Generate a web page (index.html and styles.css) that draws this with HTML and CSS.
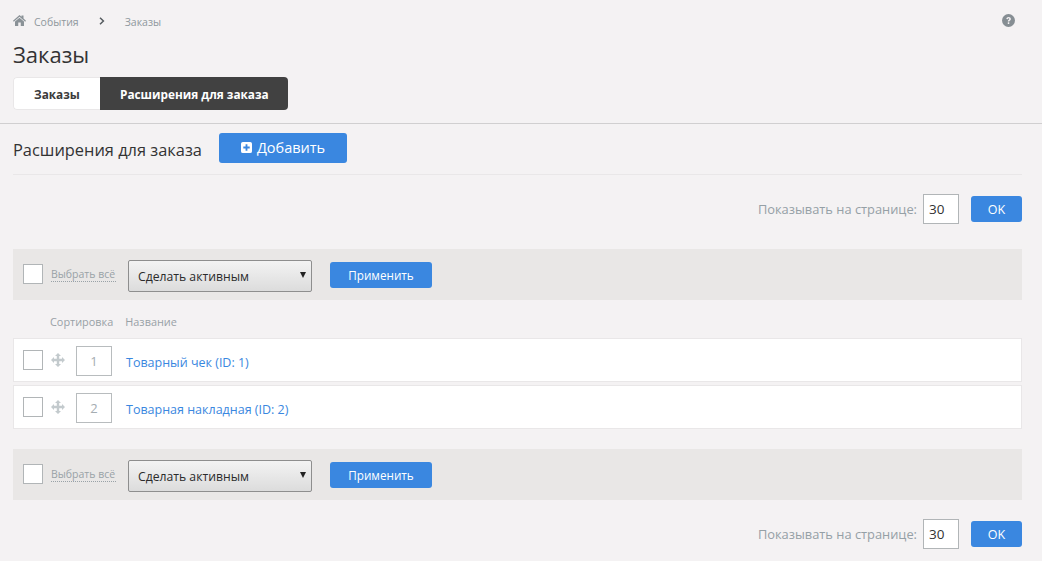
FILE: index.html
```html
<!DOCTYPE html>
<html lang="ru">
<head>
<meta charset="utf-8">
<title>Заказы</title>
<link rel="stylesheet" href="styles.css">
</head>
<body>
<header class="top">
  <nav class="crumbs">
    <svg class="home" viewBox="0 0 26 22" width="13" height="11"><path d="M13 0 L17 3.6 V1 H21 V7.2 L26 11.6 L24.4 13.4 L13 3.4 L1.6 13.4 L0 11.6 Z M4 13.2 L13 5.4 L22 13.2 V22 H15.5 V15 H10.5 V22 H4 Z" fill="#8a9297"/></svg>
    <a class="crumb crumb-first">События</a>
    <svg class="sep" viewBox="0 0 6 8" width="6" height="8"><path d="M1 0.8 L4.4 4 L1 7.2" fill="none" stroke="#555b5f" stroke-width="1.5"/></svg>
    <a class="crumb">Заказы</a>
    <svg class="help" viewBox="0 0 24 24" width="13" height="13"><circle cx="12" cy="12" r="12" fill="#868e93"/><path d="M8 9.4 C8 6.8 10 5.4 12.2 5.4 C14.600 5.4 16.4 7 16.4 9.1 C16.4 11.9 13.4 12 13.4 14 H10.7 C10.7 10.9 13.4 10.8 13.4 9.2 C13.4 8.5 12.9 8 12.1 8 C11.2 8 10.8 8.6 10.6 9.6 Z M10.7 15.4 H13.4 V18.4 H10.7 Z" fill="#f4f2f3"/></svg>
  </nav>
  <h1 class="title">Заказы</h1>
  <div class="tabs">
    <a class="tab">Заказы</a>
    <a class="tab tab-active">Расширения для заказа</a>
  </div>
</header>
<main class="content">
  <div class="section-head">
    <h2 class="section-title">Расширения для заказа</h2>
    <button class="btn btn-add" type="button">
      <svg viewBox="0 0 12 12" width="11" height="11"><path d="M2 0 H10 A2 2 0 0 1 12 2 V10 A2 2 0 0 1 10 12 H2 A2 2 0 0 1 0 10 V2 A2 2 0 0 1 2 0 Z M5 2.5 V5 H2.5 V7 H5 V9.500 H7 V7 H9.500 V5 H7 V2.5 Z" fill="#fff" fill-rule="evenodd"/></svg>
      Добавить
    </button>
  </div>
  <div class="perpage perpage-top">
    <span class="perpage-label">Показывать на странице:</span>
    <span class="num-input">30</span>
    <button class="btn btn-ok" type="button">OK</button>
  </div>
  <div class="bulk">
    <span class="check"></span>
    <span class="select-all">Выбрать всё</span>
    <span class="select">Сделать активным<i class="arrow"></i></span>
    <button class="btn btn-apply" type="button">Применить</button>
  </div>
  <div class="col-heads">
    <span class="col-sort">Сортировка</span>
    <span>Название</span>
  </div>
  <div class="rows">
    <div class="row">
      <span class="check"></span>
      <svg class="move" viewBox="0 0 14 14" width="14" height="14"><path d="M7 0 L10 3 H8.200 V5.800 H11 V4 L14 7 L11 10 V8.200 H8.200 V11 H10 L7 14 L4 11 H5.800 V8.200 H3 V10 L0 7 L3 4 V5.800 H5.800 V3 H4 Z" fill="#c3cacd"/></svg>
      <span class="order">1</span>
      <a class="row-link">Товарный чек (ID: 1)</a>
    </div>
    <div class="row">
      <span class="check"></span>
      <svg class="move" viewBox="0 0 14 14" width="14" height="14"><path d="M7 0 L10 3 H8.200 V5.800 H11 V4 L14 7 L11 10 V8.200 H8.200 V11 H10 L7 14 L4 11 H5.800 V8.200 H3 V10 L0 7 L3 4 V5.800 H5.800 V3 H4 Z" fill="#c3cacd"/></svg>
      <span class="order">2</span>
      <a class="row-link">Товарная накладная (ID: 2)</a>
    </div>
  </div>
  <div class="bulk bulk-bottom">
    <span class="check"></span>
    <span class="select-all">Выбрать всё</span>
    <span class="select">Сделать активным<i class="arrow"></i></span>
    <button class="btn btn-apply" type="button">Применить</button>
  </div>
  <div class="perpage perpage-bottom">
    <span class="perpage-label">Показывать на странице:</span>
    <span class="num-input">30</span>
    <button class="btn btn-ok" type="button">OK</button>
  </div>
</main>
</body>
</html>
```
FILE: styles.css
```css
* { box-sizing: border-box; }
html, body { height: 100%; }
body {
  margin: 0;
  background: #f4f2f3;
  color: #333;
  font-family: "Open Sans", "Noto Sans", sans-serif;
  font-size: 13px;
  overflow: hidden;
}
.top {
  padding: 14px 13px 13px;
  border-bottom: 1px solid #d0cfd0;
  height: 124px;
}
.crumbs {
  display: flex;
  align-items: center;
  height: 14px;
  padding: 1px 7px 0 0;
  font-size: 10.500px;
  color: #8f989d;
}
.home { margin-top: -2px; }
.crumb-first { margin-left: 8px; }
.sep { margin: -1px 20px 0 20px; }
.help { margin: -2px 7px 0 auto; }
.title {
  margin: 11px 0 0;
  font-size: 22px;
  font-weight: 400;
  line-height: 30px;
  color: #333;
}
.tabs {
  display: inline-flex;
  height: 33px;
  margin-top: 8px;
  border-radius: 4px;
  overflow: hidden;
  font-size: 11.800px;
  font-weight: 700;
}
.tab {
  display: flex;
  align-items: center;
  width: 87px;
  padding-left: 20px;
  background: #fff;
  border: 1px solid #e9e7e8;
  border-right: 0;
  border-radius: 4px 0 0 4px;
  color: #3a3a3a;
}
.tab.tab-active {
  width: 188px;
  padding: 0 0 0 20px;
  border: 0;
  border-radius: 0;
  background: #414141;
  color: #fff;
}
.content { padding: 0 20px 0 13px; }
.section-head {
  display: flex;
  align-items: center;
  height: 51px;
  padding-bottom: 3px;
  border-bottom: 1px solid #e9e7e8;
}
.section-title {
  width: 206px;
  margin: 3px 0 0;
  font-size: 16.400px;
  font-weight: 400;
  color: #333;
}
.btn {
  border: 0;
  border-radius: 3px;
  background: #3a87e0;
  color: #fff;
  font-family: inherit;
  padding: 0;
}
.btn-add {
  display: flex;
  align-items: center;
  justify-content: center;
  gap: 5px;
  width: 128px;
  height: 30px;
  font-size: 14.500px;
}
.perpage {
  display: flex;
  align-items: center;
  justify-content: flex-end;
  font-size: 12.850px;
  color: #95a0a6;
}
.perpage-top { margin-top: 19px; }
.perpage-bottom { margin-top: 19px; }
.perpage-label { margin-right: 6px; }
.num-input {
  display: flex;
  align-items: center;
  width: 36px;
  height: 30px;
  padding-left: 5px;
  background: #fff;
  border: 1px solid #b1b5b7;
  color: #333;
  font-size: 13.500px;
}
.btn-ok {
  width: 51px;
  height: 26px;
  margin-left: 12px;
  font-size: 12.500px;
}
.bulk {
  display: flex;
  align-items: center;
  height: 51px;
  margin-top: 25px;
  padding-left: 10px;
  background: #e9e7e6;
}
.bulk-bottom { margin-top: 20px; }
.check {
  display: block;
  flex: none;
  width: 20px;
  height: 20px;
  background: #fff;
  border: 1px solid #b1b5b7;
}
.bulk .check { margin-top: -2px; }
.select-all {
  width: 65px;
  margin-left: 8px;
  font-size: 10.500px;
  color: #99a2a7;
  border-bottom: 1px dotted #99a2a7;
  line-height: 13px;
}
.select {
  position: relative;
  display: flex;
  align-items: center;
  width: 184px;
  height: 32px;
  margin-left: 12px;
  margin-top: 2px;
  padding: 1px 0 0 9px;
  border: 1px solid #8e8e8e;
  border-radius: 2px;
  background: linear-gradient(#f3f3f3, #dcdcdc);
  color: #2b2b2b;
  font-size: 12.200px;
}
.arrow {
  position: absolute;
  right: 5px;
  top: 11px;
  border-left: 3px solid transparent;
  border-right: 3px solid transparent;
  border-top: 6px solid #222;
}
.btn-apply {
  width: 102px;
  height: 26px;
  margin-left: 18px;
  padding-top: 1px;
  font-size: 11.700px;
}
.col-heads {
  display: flex;
  align-items: center;
  height: 38px;
  padding: 8px 0 4px 37px;
  font-size: 10.900px;
  color: #98a1a6;
}
.col-sort { margin-right: 12px; }
.rows {
  display: flex;
  flex-direction: column;
  gap: 3px;
}
.row {
  display: flex;
  align-items: center;
  height: 44px;
  padding-left: 9px;
  background: #fff;
  border: 1px solid #e9e7e8;
}
.move { margin: -1px 0 0 8px; flex: none; }
.order {
  display: flex;
  align-items: center;
  justify-content: center;
  width: 36px;
  height: 30px;
  margin-left: 11px;
  margin-top: 2px;
  border: 1px solid #b8bcbe;
  color: #a5adb2;
  font-size: 13px;
}
.row-link {
  margin: 5px 0 0 14px;
  color: #3a87e0;
  font-size: 12.500px;
}
```
